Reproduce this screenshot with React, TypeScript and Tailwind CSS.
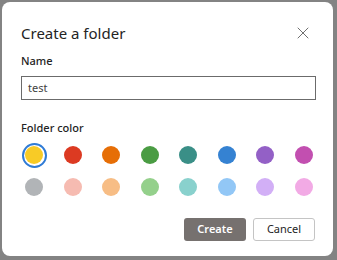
import { X } from "lucide-react";

const topColors = ["#f8cb26", "#dc3a22", "#e66e06", "#4a9c43", "#3a8f87", "#3582d2", "#9360c6", "#c24fb0"];
const bottomColors = ["#b1b4b7", "#f6bbb1", "#f7bd85", "#94d08b", "#89d1cd", "#92c7f6", "#d2aff6", "#f2aae5"];

const Swatch = ({ color, selected }: { color: string; selected?: boolean }) => (
  <div className="flex h-[26px] w-[26px] items-center justify-center">
    {selected ? (
      <div className="flex h-[25px] w-[25px] items-center justify-center rounded-full border-2 border-[#2f7bd6]">
        <div className="h-[18px] w-[18px] rounded-full" style={{ backgroundColor: color }} />
      </div>
    ) : (
      <div className="h-[18px] w-[18px] rounded-full" style={{ backgroundColor: color }} />
    )}
  </div>
);

export default function App() {
  return (
    <div className="h-[260px] w-[337px] bg-[#838383] pl-[2px] pt-[2px] font-['Noto_Sans',sans-serif]">
      <div className="flex h-[254px] w-[331px] flex-col rounded-[8px] bg-white pl-[19px] pr-[16px] pt-[20px]">
        <div className="flex items-center justify-between">
          <h1 className="text-[15px] leading-[22px] text-[#242424]">Create a folder</h1>
          <X className="mr-[4px] h-[20px] w-[20px] text-[#616161]" strokeWidth={1.1} />
        </div>
        <label className="mt-[9px] text-[11px] font-medium leading-[15px] text-[#242424]">Name</label>
        <div className="mt-[8px] flex h-[24px] w-[295px] items-center border-[1.5px] border-[#6b6b6b] px-[6px] text-[11px] text-[#424242]">
          test
        </div>
        <label className="mt-[20px] text-[11px] font-medium leading-[15px] text-[#242424]">Folder color</label>
        <div className="mt-[7px] flex flex-col gap-[6px]">
          <div className="flex justify-between">
            {topColors.map((c, i) => (
              <Swatch key={c} color={c} selected={i === 0} />
            ))}
          </div>
          <div className="flex justify-between">
            {bottomColors.map((c) => (
              <Swatch key={c} color={c} />
            ))}
          </div>
        </div>
        <div className="mt-[18px] flex justify-end gap-[7px] pr-[2px]">
          <button className="h-[23px] w-[62px] rounded-[3px] bg-[#76716f] text-[11px] font-semibold text-white">
            Create
          </button>
          <button className="h-[23px] w-[62px] rounded-[3px] border border-[#c4c4c4] bg-white text-[11px] text-[#242424]">
            Cancel
          </button>
        </div>
      </div>
    </div>
  );
}
